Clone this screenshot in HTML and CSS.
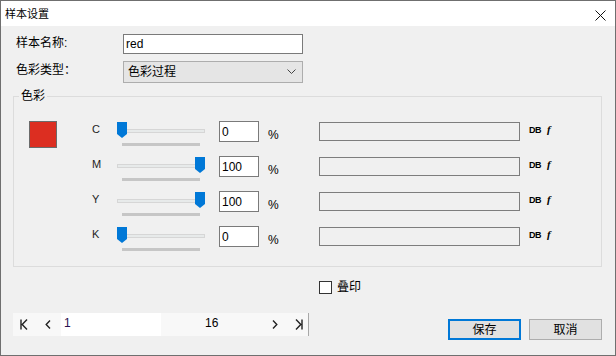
FILE: index.html
```html
<!DOCTYPE html>
<html lang="zh-CN">
<head>
  <meta charset="UTF-8" />
  <title>样本设置</title>
  <link rel="stylesheet" href="styles.css">
</head>
<body>
  <div class="window">
    <!-- Title bar -->
    <div class="titlebar">
      <span class="title">样本设置</span>
      <svg class="close" width="11" height="11" viewBox="0 0 11 11">
        <path d="M0.5 0.5L10.5 10.5M10.5 0.5L0.5 10.5" stroke="#111" stroke-width="1" fill="none"/>
      </svg>
    </div>

    <div class="content">
      <!-- Name / type -->
      <div class="form-grid">
        <label class="lbl">样本名称:</label>
        <input class="text-input" type="text" value="red" />
        <label class="lbl">色彩类型：</label>
        <div class="select">
          <span>色彩过程</span>
          <svg width="9" height="6" viewBox="0 0 9 6"><path d="M0.5 0.5L4.5 4.5 8.5 0.5" stroke="#444" fill="none"/></svg>
        </div>
      </div>

      <!-- Colour group -->
      <fieldset class="group">
        <legend>色彩</legend>
        <div class="group-body">
          <div class="swatch"></div>
          <div class="channels">
            <div class="channel">
              <span class="ch-label">C</span>
              <div class="slider">
                <div class="track"></div>
                <svg class="thumb" style="left:0px" width="10" height="16" viewBox="0 0 10 16"><path d="M0 0H10V12L5 16L0 12Z" fill="#0078d7"/></svg>
                <div class="ticks"></div>
              </div>
              <input class="num" type="text" value="0" />
              <span class="pct">%</span>
              <div class="expr"></div>
              <span class="db">DB</span>
              <span class="fx">f</span>
            </div>
            <div class="channel">
              <span class="ch-label">M</span>
              <div class="slider">
                <div class="track"></div>
                <svg class="thumb" style="left:78px" width="10" height="16" viewBox="0 0 10 16"><path d="M0 0H10V12L5 16L0 12Z" fill="#0078d7"/></svg>
                <div class="ticks"></div>
              </div>
              <input class="num" type="text" value="100" />
              <span class="pct">%</span>
              <div class="expr"></div>
              <span class="db">DB</span>
              <span class="fx">f</span>
            </div>
            <div class="channel">
              <span class="ch-label">Y</span>
              <div class="slider">
                <div class="track"></div>
                <svg class="thumb" style="left:78px" width="10" height="16" viewBox="0 0 10 16"><path d="M0 0H10V12L5 16L0 12Z" fill="#0078d7"/></svg>
                <div class="ticks"></div>
              </div>
              <input class="num" type="text" value="100" />
              <span class="pct">%</span>
              <div class="expr"></div>
              <span class="db">DB</span>
              <span class="fx">f</span>
            </div>
            <div class="channel">
              <span class="ch-label">K</span>
              <div class="slider">
                <div class="track"></div>
                <svg class="thumb" style="left:0px" width="10" height="16" viewBox="0 0 10 16"><path d="M0 0H10V12L5 16L0 12Z" fill="#0078d7"/></svg>
                <div class="ticks"></div>
              </div>
              <input class="num" type="text" value="0" />
              <span class="pct">%</span>
              <div class="expr"></div>
              <span class="db">DB</span>
              <span class="fx">f</span>
            </div>
          </div>
        </div>
      </fieldset>

      <!-- Overprint -->
      <div class="check-row">
        <span class="checkbox"></span>
        <span>叠印</span>
      </div>

      <!-- Footer -->
      <div class="footer">
        <div class="pager">
          <svg class="pg-icon first" width="8" height="11" viewBox="0 0 8 11"><path d="M1 0.5V10.5M7 0.5L2.2 5.5L7 10.5" stroke="#222" stroke-width="1.4" fill="none"/></svg>
          <svg class="pg-icon prev" width="6" height="9" viewBox="0 0 6 9"><path d="M5 0.5L1.2 4.5L5 8.5" stroke="#222" stroke-width="1.4" fill="none"/></svg>
          <span class="pg-input">1</span>
          <span class="pg-total">16</span>
          <svg class="pg-icon next" width="6" height="9" viewBox="0 0 6 9"><path d="M1 0.5L4.8 4.5L1 8.5" stroke="#222" stroke-width="1.4" fill="none"/></svg>
          <svg class="pg-icon last" width="8" height="11" viewBox="0 0 8 11"><path d="M7 0.5V10.5M1 0.5L5.8 5.5L1 10.5" stroke="#222" stroke-width="1.4" fill="none"/></svg>
        </div>
        <div class="buttons">
          <button class="btn primary">保存</button>
          <button class="btn">取消</button>
        </div>
      </div>
    </div>
  </div>
</body>
</html>
```

FILE: styles.css
```css
/* Base */
body {
  margin: 0;
  font-family: "Liberation Sans", "Noto Sans CJK SC", sans-serif;
  font-size: 12px;
  color: #000;
  background: #f0f0f0;
}
/* Window frame */
.window {
  width: 616px;
  height: 356px;
  box-sizing: border-box;
  border: 1px solid #6f6f6f;
  background: #f0f0f0;
  display: flex;
  flex-direction: column;
}
.titlebar {
  height: 25px;
  background: #fff;
  display: flex;
  align-items: center;
  justify-content: space-between;
  padding: 0 9px 0 4px;
}
.title {
  font-size: 11px;
  line-height: 14px;
  margin-top: 1px;
}
.close {
  margin-top: 3px;
}
.content {
  padding: 8px 13px 0 12px;
}
/* Name / type fields */
.form-grid {
  display: grid;
  grid-template-columns: 107px 180px;
  row-gap: 7px;
  margin-left: 3px;
}
.lbl {
  line-height: 14px;
  padding-top: 2px;
}
.text-input {
  box-sizing: border-box;
  width: 180px;
  height: 20px;
  margin: 0;
  border: 1px solid #7a7a7a;
  padding: 0 2px;
  font: 12px "Liberation Sans", sans-serif;
  background: #fff;
}
.select {
  box-sizing: border-box;
  height: 22px;
  border: 1px solid #adadad;
  background: #e5e5e5;
  display: flex;
  align-items: center;
  justify-content: space-between;
  padding: 0 6px 0 4px;
  line-height: 14px;
}
/* Colour group */
.group {
  margin: 5px 0 0 0;
  padding: 0;
  border: 1px solid #dcdcdc;
}
.group legend {
  margin-left: 5px;
  padding: 0 2px;
  line-height: 16px;
}
.group-body {
  display: flex;
  padding: 17px 0 5px 15px;
}
.swatch {
  box-sizing: border-box;
  width: 28px;
  height: 27px;
  background: #dc2e21;
  border: 1px solid #6b6b6b;
  margin-right: 35px;
}
.channel {
  display: flex;
  height: 35px;
}
.ch-label {
  width: 25px;
  font-size: 11px;
  line-height: 12px;
  color: #1d1d1d;
  padding-top: 2px;
}
.slider {
  position: relative;
  width: 88px;
  height: 26px;
  margin-right: 14px;
}
.track {
  box-sizing: border-box;
  margin-top: 8px;
  height: 4px;
  background: #e7eaea;
  border: 1px solid #d6d6d6;
}
.thumb {
  position: absolute;
  top: 1px;
}
.ticks {
  margin: 10px 0 0 5px;
  width: 78px;
  height: 3px;
  background: #c6c6c6;
}
.num {
  box-sizing: border-box;
  width: 40px;
  height: 21px;
  margin: 0;
  border: 1px solid #7a7a7a;
  padding: 0 2px;
  font: 12px "Liberation Sans", sans-serif;
  background: #fff;
}
.pct {
  width: 51px;
  margin-left: 9px;
  padding-top: 7px;
  line-height: 14px;
}
.expr {
  box-sizing: border-box;
  width: 201px;
  height: 19px;
  margin-top: 1px;
  border: 1px solid #7d7d7d;
  background: #f0f0f0;
}
.db {
  margin-left: 9px;
  width: 18px;
  font-size: 9px;
  font-weight: bold;
  letter-spacing: -0.5px;
  padding-top: 4px;
  line-height: 10px;
}
.fx {
  font-family: "Liberation Serif", serif;
  font-style: italic;
  font-weight: bold;
  font-size: 11px;
  line-height: 11px;
  padding-top: 3px;
}
/* Overprint checkbox */
.check-row {
  display: flex;
  align-items: center;
  gap: 5px;
  margin: 13px 0 0 306px;
  line-height: 14px;
}
.checkbox {
  box-sizing: border-box;
  width: 13px;
  height: 13px;
  border: 1px solid #333;
  background: #fff;
}
/* Footer */
.footer {
  display: flex;
  justify-content: space-between;
  margin-top: 19px;
}
.pager {
  display: flex;
  align-items: center;
  width: 295px;
  height: 23px;
  background: #f8f8f8;
  border-right: 1px solid #a8a8a8;
}
.pg-icon.first {
  margin-left: 7px;
}
.pg-icon.prev {
  margin-left: 17px;
}
.pg-input {
  align-self: stretch;
  width: 97px;
  margin-left: 10px;
  padding-left: 3px;
  background: #fff;
  color: #2a1050;
  line-height: 20px;
}
.pg-total {
  margin-left: 44px;
  line-height: 14px;
  margin-top: -4px;
}
.pg-icon.next {
  margin-left: 54px;
}
.pg-icon.last {
  margin-left: 17px;
}
.buttons {
  display: flex;
  gap: 8px;
  margin-top: 6px;
}
.btn {
  box-sizing: border-box;
  width: 73px;
  height: 21px;
  padding: 0;
  background: #e1e1e1;
  border: 1px solid #adadad;
  font: 12px "Liberation Sans", "Noto Sans CJK SC", sans-serif;
  line-height: 14px;
}
.btn.primary {
  border: 2px solid #0078d7;
}
```
